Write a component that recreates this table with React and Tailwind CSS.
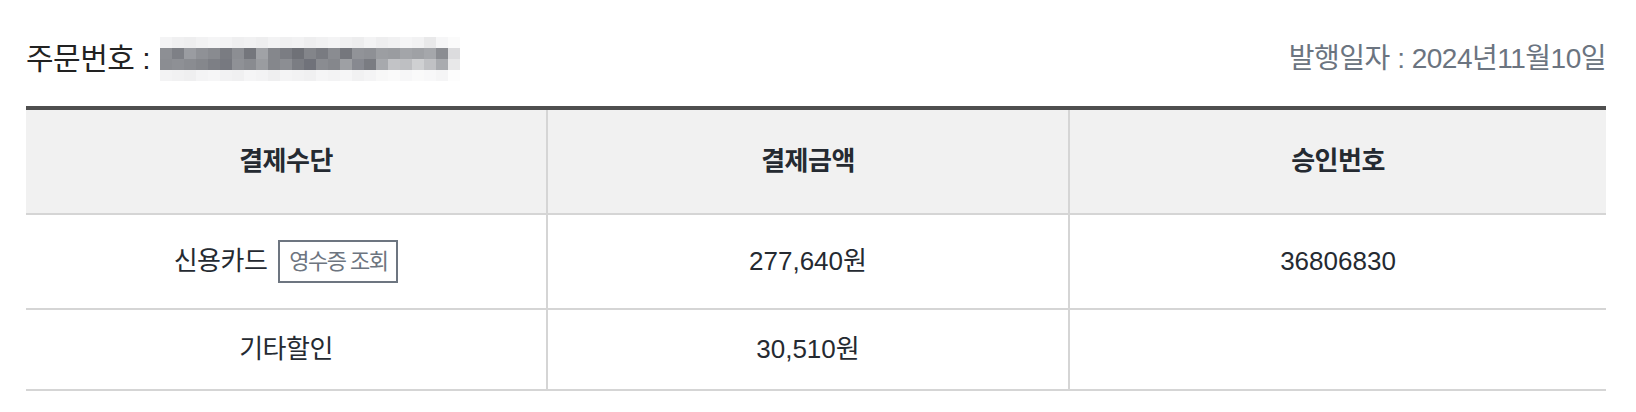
import React from 'react';

const FONT = { fontFamily: '"Liberation Sans", "Noto Sans CJK KR", sans-serif' };

// 모자이크 처리된 주문번호 (4줄 x 25칸)
const mosaic = [
  ['#f4f4f5', '#f0f0f1', '#eeeeef', '#f2f2f3', '#f5f5f6', '#f3f3f4', '#efeff0', '#f1f1f2', '#eeeeef', '#f3f3f4', '#f0f0f1', '#f2f2f3', '#eeeeef', '#f1f1f2', '#f4f4f5', '#f0f0f1', '#ededee', '#f3f3f4', '#eeeeef', '#f1f1f2', '#f5f5f6', '#f2f2f3', '#e9e9ea', '#f6f6f7', '#fbfbfb'],
  ['#8d8f94', '#7e8086', '#9a9ca1', '#8f9196', '#898b90', '#7a7c82', '#8c8e93', '#74767c', '#a0a2a6', '#85878c', '#7b7d83', '#6f7177', '#83858a', '#797b81', '#8a8c91', '#75777d', '#919398', '#8e9095', '#9c9ea2', '#9a9ca0', '#a3a5a9', '#9fa1a5', '#a5a7ab', '#8b8d92', '#dcdcde'],
  ['#8b8d92', '#8e9095', '#8a8c91', '#85878c', '#7d7f85', '#777980', '#8f9196', '#898b90', '#9a9ca0', '#85878c', '#8c8e93', '#7b7d83', '#70727a', '#8a8c91', '#85878c', '#9ea0a4', '#878990', '#7a7c82', '#a7a9ad', '#c2c3c6', '#bebfc2', '#cfd0d2', '#c0c1c4', '#a9abaf', '#e8e8e9'],
  ['#f3f3f4', '#f1f1f2', '#efeff0', '#f4f4f5', '#f6f6f7', '#f2f2f3', '#f0f0f1', '#f5f5f6', '#f3f3f4', '#efeff0', '#f4f4f5', '#f2f2f3', '#f0f0f1', '#f5f5f6', '#f3f3f4', '#f6f6f7', '#f1f1f2', '#f4f4f5', '#f8f8f8', '#fafafa', '#f7f7f8', '#fafafa', '#f8f8f9', '#f5f5f6', '#fdfdfd'],
];

const rows = [
  { method: '신용카드', amount: '277,640원', approval: '36806830', receipt: true },
  { method: '기타할인', amount: '30,510원', approval: '', receipt: false },
];

const App = () => {
  return (
    <div className="bg-white w-[1636px] h-[412px] px-[26px] pr-[30px] text-[#252a31]" style={FONT}>
      {/* 상단 */}
      <div className="flex justify-between items-center pt-[37px] pb-[25px] leading-[36px]">
        <div className="flex items-center text-[30px] tracking-[-0.5px] text-[#222]">
          <span>주문번호 :</span>
          <div className="ml-[10px] flex flex-col">
            {mosaic.map((line, i) => (
              <div key={i} className="flex">
                {line.map((c, j) => (
                  <div key={j} className="w-[12px] h-[11px]" style={{ backgroundColor: c }} />
                ))}
              </div>
            ))}
          </div>
        </div>
        <div className="text-[28px] tracking-[-0.5px] text-[#6b7480]">발행일자 : 2024년11월10일</div>
      </div>

      {/* 결제 내역 테이블 */}
      <div className="border-t-4 border-[#4f4f4f]">
        <div className="grid grid-cols-[522px_522px_1fr] h-[105px] bg-[#f1f1f1] border-b-2 border-[#d5d5d5] text-[26px] font-bold tracking-[-0.5px]">
          <div className="flex items-center justify-center border-r-2 border-[#d5d5d5]">결제수단</div>
          <div className="flex items-center justify-center border-r-2 border-[#d5d5d5]">결제금액</div>
          <div className="flex items-center justify-center">승인번호</div>
        </div>
        {rows.map((row, i) => (
          <div
            key={i}
            className={`grid grid-cols-[522px_522px_1fr] border-b-2 border-[#d5d5d5] text-[26px] ${row.receipt ? 'h-[95px]' : 'h-[81px]'}`}
          >
            <div className="flex items-center justify-center border-r-2 border-[#d5d5d5]">
              <span className="tracking-[-0.5px]">{row.method}</span>
              {row.receipt && (
                <button className="ml-[11px] w-[120px] h-[43px] border-2 border-[#6d7580] text-[22px] text-[#6d7580] tracking-[-1.5px] whitespace-nowrap">
                  영수증 조회
                </button>
              )}
            </div>
            <div className="flex items-center justify-center border-r-2 border-[#d5d5d5]">{row.amount}</div>
            <div className="flex items-center justify-center">{row.approval}</div>
          </div>
        ))}
      </div>
    </div>
  );
};

export default App;
